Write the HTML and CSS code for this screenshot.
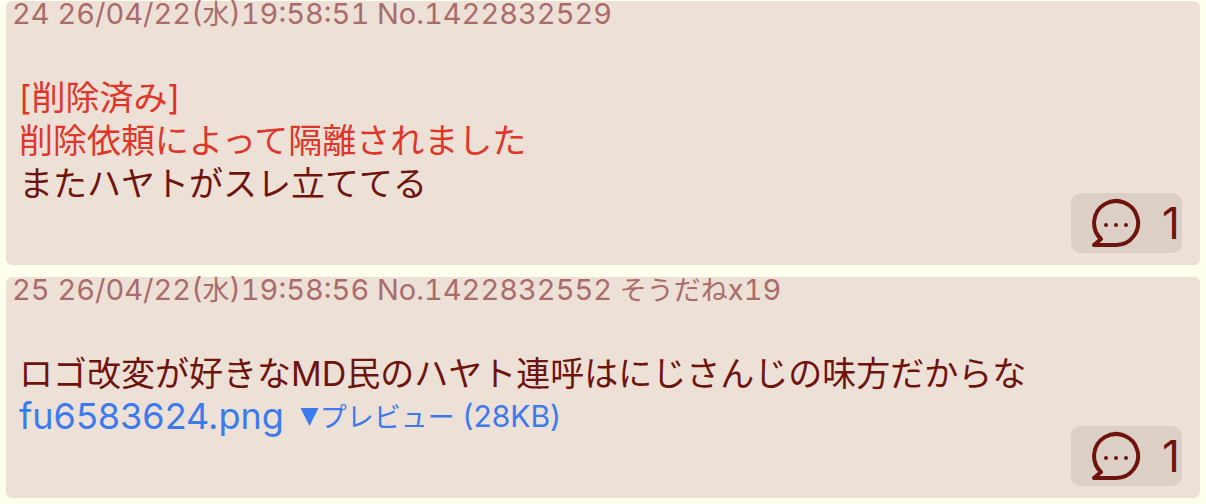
FILE: index.html
```
<!DOCTYPE html>
<html lang="ja">
<head>
<meta charset="utf-8">
<meta name="viewport" content="width=device-width, initial-scale=1">
<title>レス一覧</title>
<link rel="stylesheet" href="styles.css">
</head>
<body>
<main class="thread">
  <article class="post">
    <header class="meta">24 26/04/22(<span class="ja">水</span>)19:58:51 No.1422832529</header>
    <div class="body">
      <p class="deleted">[削除済み]</p>
      <p class="deleted">削除依頼によって隔離されました</p>
      <p>またハヤトがスレ立ててる</p>
    </div>
    <button class="replies" type="button" aria-label="返信 1">
      <svg class="bubble" viewBox="0 0 50 50" aria-hidden="true"><path d="M3 47 L10 41 A22 22 0 1 1 25 47 Z"/><g class="dots"><circle cx="15" cy="27" r="2"/><circle cx="25" cy="27" r="2"/><circle cx="35" cy="27" r="2"/></g></svg>
      <span>1</span>
    </button>
  </article>
  <article class="post">
    <header class="meta">25 26/04/22(<span class="ja">水</span>)19:58:56 No.1422832552 <span class="ja">そうだね</span>x19</header>
    <div class="body">
      <p>ロゴ改変が好きなMD民のハヤト連呼はにじさんじの味方だからな</p>
      <p class="file"><a class="name" href="#file">fu6583624.png</a><a class="preview" href="#preview"><svg class="triangle" viewBox="0 0 20 20" aria-hidden="true"><path d="M1 1H19L10 19Z"/></svg>プレビュー <span class="size">(28KB)</span></a></p>
    </div>
    <button class="replies" type="button" aria-label="返信 1">
      <svg class="bubble" viewBox="0 0 50 50" aria-hidden="true"><path d="M3 47 L10 41 A22 22 0 1 1 25 47 Z"/><g class="dots"><circle cx="15" cy="27" r="2"/><circle cx="25" cy="27" r="2"/><circle cx="35" cy="27" r="2"/></g></svg>
      <span>1</span>
    </button>
  </article>
</main>
</body>
</html>
```
FILE: styles.css
```
* { box-sizing: border-box; }
body {
  margin: 0;
  background: #ffffee;
  color: #6f130d;
  font-family: Inter, "Noto Sans CJK JP", sans-serif;
}
.thread {
  display: flex;
  flex-direction: column;
  gap: 12px;
  padding: 1px 6px 5px;
}
.post {
  display: flex;
  flex-direction: column;
  padding: 0 18px 12px 6px;
  border-radius: 6px;
  background: #ede0d7;
}
.meta {
  padding-bottom: 49px;
  color: #aa6c6a;
  font-size: 29px;
  font-variant-numeric: tabular-nums;
  line-height: 26px;
}
.meta .ja { font-size: 27px; line-height: 20px; }
.body {
  padding-left: 7px;
  font-size: 34px;
  line-height: 43px;
}
.body p { margin: 0; }
.body .deleted { color: #e0362a; }
.body .file {
  display: flex;
  align-items: center;
  gap: 15px;
}
.file a { color: #3b7bed; text-decoration: none; }
.file .name { font-size: 36px; }
.file .preview { font-size: 27px; line-height: 36px; }
.file .size { font-size: 30px; }
.triangle { width: 21px; height: 20px; fill: currentColor; }
.replies {
  display: flex;
  align-items: center;
  align-self: flex-end;
  justify-content: space-between;
  width: 111px;
  height: 60px;
  margin-top: -12px;
  padding: 0 2px 0 20px;
  border: 0;
  border-radius: 10px;
  background: #dbcfc6;
  color: inherit;
  font: 44px Inter, sans-serif;
}
.bubble { width: 50px; height: 50px; fill: none; stroke: currentColor; stroke-width: 4; stroke-linejoin: round; }
.dots { fill: currentColor; stroke: none; }
```
